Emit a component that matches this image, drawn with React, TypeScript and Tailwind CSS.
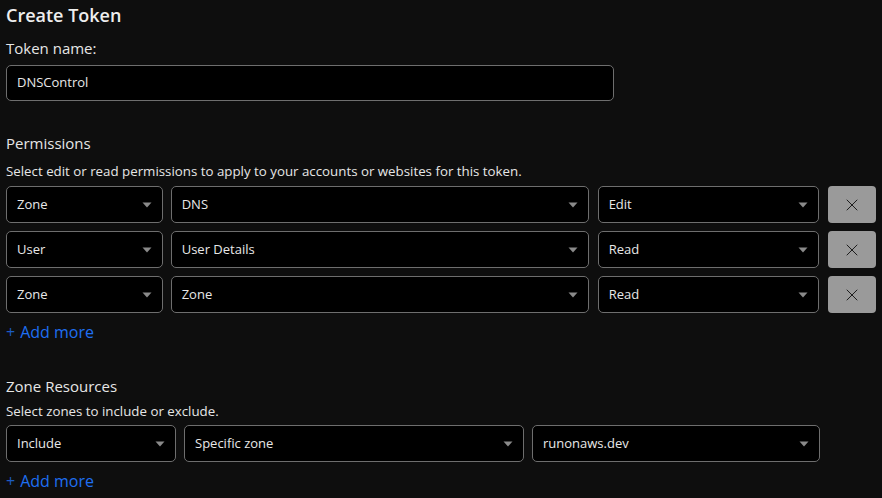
import { X } from 'lucide-react';

function Caret() {
  return (
    <svg width="10" height="6" viewBox="0 0 10 6" className="shrink-0">
      <path d="M0.5 0.5 L9.5 0.5 L5 5.5 Z" fill="#8a8a8a" />
    </svg>
  );
}

function Select({ value, className }: { value: string; className: string }) {
  return (
    <div
      className={`h-[37px] flex items-center justify-between pl-[10px] pr-[10px] bg-black border border-[#6e6e6e] rounded-[5px] text-[13px] text-[#e8e8e8] ${className}`}
    >
      <span>{value}</span>
      <Caret />
    </div>
  );
}

function RemoveButton() {
  return (
    <button className="w-[48px] h-[37px] flex items-center justify-center bg-[#9a9a9a] rounded-[4px] ml-[9px]">
      <X size={20} strokeWidth={1.1} color="#111" />
    </button>
  );
}

function AddMore({ className }: { className: string }) {
  return (
    <div className={`flex items-center text-[16px] text-[#1f6ff2] ${className}`}>
      <span className="mr-[5px] text-[#1c5cc4]">+</span>
      <span>Add more</span>
    </div>
  );
}

const permissions = [
  { scope: 'Zone', item: 'DNS', level: 'Edit' },
  { scope: 'User', item: 'User Details', level: 'Read' },
  { scope: 'Zone', item: 'Zone', level: 'Read' },
];

export default function App() {
  return (
    <div
      className="w-[882px] h-[498px] overflow-hidden bg-[#0e0e0e] text-[#e6e6e6] px-[6px] pt-[1px]"
      style={{ fontFamily: '"Open Sans", "Noto Sans", sans-serif' }}
    >
      <h1 className="text-[18px] font-semibold leading-[28px] text-[#eeeeee]">Create Token</h1>

      <label className="block mt-[8px] text-[15px] leading-[22px]">Token name:</label>
      <div className="mt-[6px] w-[608px] h-[36px] flex items-center px-[10px] bg-black border border-[#6e6e6e] rounded-[5px] text-[13px] text-[#e8e8e8]">
        DNSControl
      </div>

      {/* Permissions */}
      <h2 className="mt-[31px] text-[15px] leading-[22px]">Permissions</h2>
      <p className="mt-[8px] text-[13.3px] leading-[18px]">
        Select edit or read permissions to apply to your accounts or websites for this token.
      </p>
      <div className="mt-[6px] flex flex-col gap-[8px]">
        {permissions.map((p, i) => (
          <div key={i} className="flex items-center">
            <Select value={p.scope} className="w-[157px]" />
            <Select value={p.item} className="w-[419px] ml-[8px]" />
            <Select value={p.level} className="w-[222px] ml-[9px]" />
            <RemoveButton />
          </div>
        ))}
      </div>
      <AddMore className="mt-[8px] leading-[22px]" />

      {/* Zone resources */}
      <h2 className="mt-[32px] text-[15px] leading-[22px]">Zone Resources</h2>
      <p className="mt-[5px] text-[13.3px] leading-[18px]">Select zones to include or exclude.</p>
      <div className="mt-[5px] flex items-center">
        <Select value="Include" className="w-[170px]" />
        <Select value="Specific zone" className="w-[340px] ml-[8px]" />
        <Select value="runonaws.dev" className="w-[288px] ml-[8px]" />
      </div>
      <AddMore className="mt-[8px] leading-[22px]" />
    </div>
  );
}
